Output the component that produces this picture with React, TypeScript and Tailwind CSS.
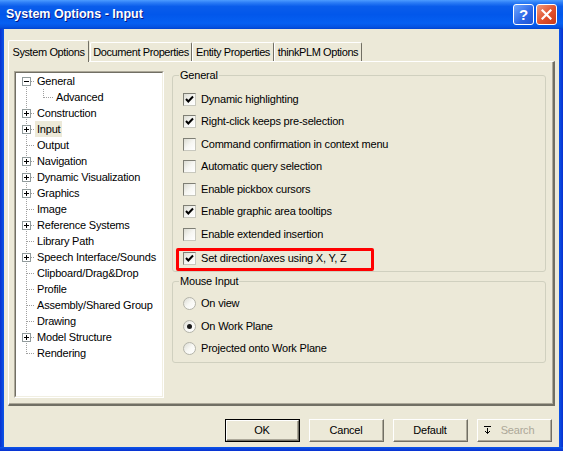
import React from "react";

const treeItems = [
  { label: "General", box: "minus", first: true },
  { label: "Advanced", child: true },
  { label: "Construction", box: "plus" },
  { label: "Input", box: "plus", selected: true },
  { label: "Output" },
  { label: "Navigation", box: "plus" },
  { label: "Dynamic Visualization", box: "plus" },
  { label: "Graphics", box: "plus" },
  { label: "Image" },
  { label: "Reference Systems", box: "plus" },
  { label: "Library Path" },
  { label: "Speech Interface/Sounds", box: "plus" },
  { label: "Clipboard/Drag&Drop" },
  { label: "Profile" },
  { label: "Assembly/Shared Group" },
  { label: "Drawing" },
  { label: "Model Structure", box: "plus" },
  { label: "Rendering", last: true },
];

const generalOptions = [
  { label: "Dynamic highlighting", checked: true },
  { label: "Right-click keeps pre-selection", checked: true },
  { label: "Command confirmation in context menu", checked: false },
  { label: "Automatic query selection", checked: false },
  { label: "Enable pickbox cursors", checked: false },
  { label: "Enable graphic area tooltips", checked: true },
  { label: "Enable extended insertion", checked: false },
];

const mouseOptions = [
  { label: "On view", selected: false },
  { label: "On Work Plane", selected: true },
  { label: "Projected onto Work Plane", selected: false },
];

function TreeLines({ item }: { item: any }) {
  const w = item.child ? 38 : 19;
  const dot = "#A0A0A0";
  return (
    <svg width={w} height={16} shapeRendering="crispEdges" className="shrink-0">
      {/* main vertical line */}
      <line x1={10.5} y1={item.first ? 8 : 0} x2={10.5} y2={item.last ? 9 : 16} stroke={dot} strokeDasharray="1 1" />
      {!item.child && <line x1={11} y1={8.5} x2={19} y2={8.5} stroke={dot} strokeDasharray="1 1" />}
      {item.child && (
        <>
          <line x1={27.5} y1={0} x2={27.5} y2={9} stroke={dot} strokeDasharray="1 1" />
          <line x1={28} y1={8.5} x2={37} y2={8.5} stroke={dot} strokeDasharray="1 1" />
        </>
      )}
      {item.box && (
        <>
          <rect x={6.5} y={4.5} width={8} height={8} fill="#fff" stroke="#919B9C" />
          <line x1={8} y1={8.5} x2={13} y2={8.5} stroke="#000" />
          {item.box === "plus" && <line x1={10.5} y1={6} x2={10.5} y2={11} stroke="#000" />}
        </>
      )}
    </svg>
  );
}

function CheckBox({ checked }: { checked: boolean }) {
  return (
    <div className="w-[13px] h-[13px] shrink-0 border border-t-[#7F7F75] border-l-[#7F7F75] border-r-[#C8C8BE] border-b-[#C8C8BE] bg-gradient-to-br from-[#DCDCD2] via-[#F6F6F2] to-white flex items-center justify-center">
      {checked && (
        <svg width="11" height="11" viewBox="0 0 11 11">
          <path d="M2 5 L4.3 7.5 L9 2.5" fill="none" stroke="#000" strokeWidth="2" />
        </svg>
      )}
    </div>
  );
}

function Radio({ selected }: { selected: boolean }) {
  return (
    <div className="w-[13px] h-[13px] shrink-0 rounded-full border border-[#B4B4AA] bg-gradient-to-br from-[#DCDCD4] via-[#F8F8F4] to-white flex items-center justify-center">
      {selected && <div className="w-[5px] h-[5px] rounded-full bg-[#1A1A1A]" />}
    </div>
  );
}

function XPButton({ children, isDefault, disabled }: { children: React.ReactNode; isDefault?: boolean; disabled?: boolean }) {
  return (
    <div className={`w-[75px] h-[23px] ${isDefault ? "border border-black" : ""}`}>
      <div className="h-full border border-t-white border-l-white border-r-[#716F64] border-b-[#716F64] bg-[#ECE9D8]">
        <div className={`h-full flex items-center justify-center border-r border-b border-[#ACA899] ${disabled ? "text-[#ACA899]" : "text-black"}`}>
          {children}
        </div>
      </div>
    </div>
  );
}

export default function App() {
  return (
    <div className="w-[563px] h-[451px] flex flex-col bg-[#ECE9D8] font-['Liberation_Sans',Arial,sans-serif] text-[11px] leading-[13px] tracking-[-0.2px] whitespace-nowrap text-black select-none overflow-hidden">
      {/* Title bar */}
      <div className="h-[29px] shrink-0 flex items-center pl-[6px] pr-[6px] bg-[linear-gradient(to_bottom,#4D9CFF_0%,#2C7DF6_9%,#0A5DEB_22%,#0257EB_50%,#0660F2_80%,#0553E2_93%,#0044D0_100%)]">
        <span className="flex-1 text-white font-bold text-[12.5px] tracking-[0px] [text-shadow:1px_1px_#0A1883]">System Options - Input</span>
        <div className="flex gap-[2px] items-center">
          <div className="w-[21px] h-[21px] rounded-[3px] border border-white bg-[linear-gradient(135deg,#6FA6FF,#2B66E6_60%,#1F55D4)] flex items-center justify-center text-white font-bold text-[15px] leading-none">?</div>
          <div className="w-[21px] h-[21px] rounded-[3px] border border-white bg-[linear-gradient(135deg,#F09A7C,#E0502C_55%,#C83A1A)] flex items-center justify-center">
            <svg width="11" height="11" viewBox="0 0 11 11">
              <path d="M1.5 1.5 L9.5 9.5 M9.5 1.5 L1.5 9.5" stroke="#fff" strokeWidth="2.2" strokeLinecap="square" />
            </svg>
          </div>
        </div>
      </div>

      <div className="flex-1 flex min-h-0">
        <div className="w-[4px] bg-[linear-gradient(to_right,#0831D0,#0B55E8)]" />

        {/* Body */}
        <div className="flex-1 flex flex-col">
          {/* Tabs */}
          <div className="mt-[11px] h-[21px] flex items-end pl-[4px] tracking-[-0.4px]">
            <div className="relative z-10 w-[81px] h-[22px] -mb-px bg-[#ECE9D8] border-l border-t border-white border-r border-r-[#716F64] rounded-t-[2px] flex items-center justify-center pt-[1px]">
              System Options
            </div>
            <div className="w-[102px] h-[19px] ml-[1px] bg-[#ECE9D8] border-l border-t border-white border-r border-r-[#716F64] rounded-t-[2px] flex items-center justify-center pt-[1px]">
              Document Properties
            </div>
            <div className="w-[82px] h-[19px] bg-[#ECE9D8] border-l border-t border-white border-r border-r-[#716F64] rounded-t-[2px] flex items-center justify-center pt-[1px]">
              Entity Properties
            </div>
            <div className="w-[88px] h-[19px] bg-[#ECE9D8] border-l border-t border-white border-r border-r-[#716F64] rounded-t-[2px] flex items-center justify-center pt-[1px]">
              thinkPLM Options
            </div>
          </div>

          {/* Tab panel */}
          <div className="ml-[4px] w-[547px] h-[345px] border-l border-t border-white border-r-2 border-b-2 border-r-[#716F64] border-b-[#716F64]">
            <div className="h-full flex items-start border-r border-b border-[#ACA899] pl-[5px]">
              {/* Tree */}
              <div className="mt-[9px] w-[150px] h-[327px] border border-t-[#ACA899] border-l-[#ACA899] border-r-white border-b-white">
                <div className="h-full bg-white border border-t-[#716F64] border-l-[#716F64] border-r-[#F1EFE2] border-b-[#F1EFE2] overflow-hidden">
                  {treeItems.map((item) => (
                    <div key={item.label} className="h-[16px] flex items-center">
                      <TreeLines item={item} />
                      <span className={`h-[16px] px-[2px] flex items-center ${item.selected ? "bg-[#ECE9D8]" : ""}`}>{item.label}</span>
                    </div>
                  ))}
                </div>
              </div>

              {/* Options */}
              <div className="ml-[8px] mt-[7px] w-[374px] flex flex-col">
                <fieldset className="border border-[#D0D0BF] rounded-[3px] pt-[6px] pb-0">
                  <legend className="ml-[6px] px-[1px] leading-[13px]">General</legend>
                  {generalOptions.map((o) => (
                    <div key={o.label} className="h-[22.5px] flex items-center gap-[5px] pl-[10px]">
                      <CheckBox checked={o.checked} />
                      <span>{o.label}</span>
                    </div>
                  ))}
                  <div className="mt-[2.75px] ml-[3px] w-[198px] h-[23px] border-[3px] border-[#FF0000] rounded-[2px] flex items-center gap-[5px] pl-[4px] pb-[3px]">
                    <CheckBox checked={true} />
                    <span>Set direction/axes using X, Y, Z</span>
                  </div>
                </fieldset>

                <fieldset className="mt-[3px] border border-[#D0D0BF] rounded-[3px] pt-[4px] pb-[2px]">
                  <legend className="ml-[6px] px-[1px] leading-[13px]">Mouse Input</legend>
                  {mouseOptions.map((o) => (
                    <div key={o.label} className="h-[22.5px] flex items-center gap-[5px] pl-[10px]">
                      <Radio selected={o.selected} />
                      <span>{o.label}</span>
                    </div>
                  ))}
                </fieldset>
              </div>
            </div>
          </div>

          {/* Buttons */}
          <div className="mt-[13px] flex justify-end gap-[9px] pr-[7px]">
            <XPButton isDefault>OK</XPButton>
            <XPButton>Cancel</XPButton>
            <XPButton>Default</XPButton>
            <XPButton disabled>
              <svg width="7" height="8" viewBox="0 0 7 8" className="mr-[10px] ml-[-10px]">
                <path d="M0 0.5 H7 M3.5 2 V7.5 M1 5 L3.5 7.5 L6 5" fill="none" stroke="#000" strokeWidth="1" />
              </svg>
              Search
            </XPButton>
          </div>
        </div>

        <div className="w-[4px] bg-[linear-gradient(to_right,#0B55E8,#0831D0)]" />
      </div>
      <div className="h-[4px] shrink-0 bg-[linear-gradient(to_bottom,#0B55E8,#0831D0)]" />
    </div>
  );
}
